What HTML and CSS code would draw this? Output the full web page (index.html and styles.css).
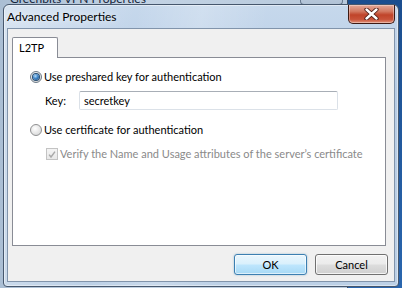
FILE: index.html
```html
<!DOCTYPE html>
<html>
<head>
<meta charset="utf-8">
<link rel="stylesheet" href="styles.css">
</head>
<body>
<div class="desktop">
  <div class="parent-win">
    <span class="parent-title">Greenbits VPN Properties</span>
    <div class="parent-close">x</div>
  </div>
  <div class="dialog">
    <div class="titlebar">
      <span class="title">Advanced Properties</span>
      <div class="close-btn">
        <svg width="15" height="12" viewBox="0 0 15 12">
          <path d="M2.5 1.5 L12.5 10.5 M12.5 1.5 L2.5 10.5" stroke="#4a1c14" stroke-width="4.2" stroke-linecap="round"/>
          <path d="M2.5 1.5 L12.5 10.5 M12.5 1.5 L2.5 10.5" stroke="#ffffff" stroke-width="2.4" stroke-linecap="round"/>
        </svg>
      </div>
    </div>
    <div class="client">
      <div class="tabstrip">
        <div class="tab">L2TP</div>
      </div>
      <div class="panel">
        <div class="row row-first">
          <span class="radio radio-on"><span class="dot"></span></span>
          <span class="label">Use preshared key for authentication</span>
        </div>
        <div class="key-row">
          <span class="key-label">Key:</span>
          <div class="textbox">secretkey</div>
        </div>
        <div class="row row-second">
          <span class="radio"></span>
          <span class="label">Use certificate for authentication</span>
        </div>
        <div class="row check-row">
          <span class="check">
            <svg width="11" height="11" viewBox="0 0 11 11"><path d="M2.3 5.6 L4.4 8.2 L8.8 2.4" fill="none" stroke="#a9a9a9" stroke-width="1.6"/></svg>
          </span>
          <span class="label disabled">Verify the Name and Usage attributes of the server’s certificate</span>
        </div>
      </div>
      <div class="buttons">
        <div class="btn btn-default">OK</div>
        <div class="btn">Cancel</div>
      </div>
    </div>
  </div>
</div>
</body>
</html>
```

FILE: styles.css
```css
* { box-sizing: border-box; }
html, body { margin: 0; padding: 0; }
body {
  width: 402px;
  height: 288px;
  overflow: hidden;
  font-family: Lato, "Liberation Sans", sans-serif;
  font-size: 11px;
  color: #000;
}
.desktop {
  position: relative;
  width: 402px;
  height: 288px;
  overflow: hidden;
  background: linear-gradient(180deg, #1b4e8f 0%, #2a66ae 100%);
}
.parent-win {
  position: absolute;
  left: -8px;
  top: -20px;
  width: 356px;
  height: 318px;
  border: 1px solid #3b4a5e;
  border-radius: 6px;
  background: linear-gradient(90deg, #a9bdd3 0%, #c3d3e4 40%, #b7c9dc 100%);
}
.parent-title {
  position: absolute;
  left: 17px;
  top: 10px;
  font-size: 12px;
  color: #15253b;
}
.parent-close {
  position: absolute;
  right: 4px;
  top: 0;
  width: 43px;
  height: 24px;
  border: 1px solid #66788e;
  border-top: none;
  border-radius: 0 0 4px 4px;
  background: linear-gradient(#c9d6e4, #b1c2d6);
  color: #2b3b52;
  font-weight: bold;
  text-align: center;
  line-height: 20px;
  font-size: 14px;
}
.dialog {
  position: absolute;
  left: 3px;
  top: 4px;
  width: 396px;
  height: 283px;
  border: 1px solid #46576d;
  border-radius: 6px 6px 4px 4px;
  background:
    linear-gradient(100deg, rgba(255,255,255,0.35) 0%, rgba(255,255,255,0) 30%, rgba(255,255,255,0.2) 45%, rgba(255,255,255,0) 60%),
    linear-gradient(180deg, #c6d8ec 0%, #b8cde5 30%, #bcd0e6 100%);
  padding: 0 3px 4px 3px;
  display: flex;
  flex-direction: column;
  box-shadow: inset 0 0 0 1px rgba(255,255,255,0.45);
}
.titlebar {
  height: 23px;
  display: flex;
  align-items: center;
  flex: none;
}
.title {
  font-size: 12px;
  color: #000;
  text-shadow: 0 0 6px rgba(255,255,255,0.9);
}
.close-btn {
  margin-left: auto;
  align-self: flex-start;
  width: 47px;
  height: 19px;
  border: 1px solid #3d1a14;
  border-top: none;
  border-radius: 0 0 5px 5px;
  background: linear-gradient(180deg, #e3a898 0%, #d37a62 35%, #c0442a 55%, #c8533a 80%, #e2927a 100%);
  box-shadow: inset 0 0 0 1px rgba(255,255,255,0.35);
  display: flex;
  align-items: center;
  justify-content: center;
}
.client {
  flex: none;
  height: 254px;
  border: 1px solid #8194ab;
  background: #f0f0f0;
  padding: 8px 8px 6px 4px;
  display: flex;
  flex-direction: column;
}
.tabstrip {
  display: flex;
  height: 20px;
  flex: none;
  position: relative;
  z-index: 1;
}
.tab {
  width: 46px;
  height: 21px;
  border: 1px solid #898c95;
  border-bottom: none;
  border-radius: 2px 2px 0 0;
  background: #ffffff;
  padding-left: 6px;
  padding-top: 3px;
  line-height: 14px;
}
.panel {
  flex: none;
  height: 189px;
  border: 1px solid #898c95;
  background: #ffffff;
  padding: 11px 0 0 17px;
  display: flex;
  flex-direction: column;
}
.row {
  display: flex;
  align-items: center;
  height: 16px;
}
.label {
  margin-left: 2px;
  line-height: 16px;
  white-space: nowrap;
}
.label.disabled { color: #8a8a8a; }
.radio {
  width: 12px;
  height: 12px;
  border-radius: 50%;
  border: 1px solid #8f9091;
  background: radial-gradient(circle at 40% 35%, #ffffff 0%, #eaeaea 45%, #cfd0d1 100%);
  display: flex;
  align-items: center;
  justify-content: center;
  flex: none;
}
.radio-on { border-color: #6d7a86; }
.dot {
  width: 6px;
  height: 6px;
  border-radius: 50%;
  background: radial-gradient(circle at 40% 35%, #b7def8 0%, #3f86c9 45%, #16477c 100%);
  box-shadow: 0 0 0 1px #274d72;
}
.key-row {
  display: flex;
  align-items: center;
  margin-top: 6px;
  padding-left: 15px;
  height: 19px;
}
.key-label { width: 34px; }
.textbox {
  width: 259px;
  height: 19px;
  border: 1px solid #dbe1e8;
  border-top-color: #a8aeb6;
  border-radius: 2px;
  background: #fff;
  padding-left: 4px;
  line-height: 17px;
}
.row-second { margin-top: 12px; }
.check-row { margin-top: 8px; padding-left: 16px; }
.check {
  width: 12px;
  height: 12px;
  border: 1px solid #c3c3c3;
  background: linear-gradient(#f4f4f4, #e8e8e8);
  display: flex;
  align-items: center;
  justify-content: center;
  flex: none;
}
.check svg { display: block; }
.buttons {
  display: flex;
  justify-content: flex-end;
  gap: 8px;
  margin-top: 8px;
  margin-right: -2px;
}
.btn {
  width: 73px;
  height: 21px;
  border: 1px solid #707070;
  border-radius: 3px;
  background: linear-gradient(180deg, #f2f2f2 0%, #ebebeb 48%, #dddddd 52%, #cfcfcf 100%);
  box-shadow: inset 0 0 0 1px rgba(255,255,255,0.75);
  text-align: center;
  line-height: 19px;
}
.btn-default {
  border-color: #3c7fb1;
  background: linear-gradient(180deg, #eaf6fd 0%, #d9f0fc 48%, #bee6fd 52%, #a7d9f5 100%);
  box-shadow: inset 0 0 0 1px rgba(255,255,255,0.6), 0 0 2px rgba(60,127,177,0.5);
}
```
